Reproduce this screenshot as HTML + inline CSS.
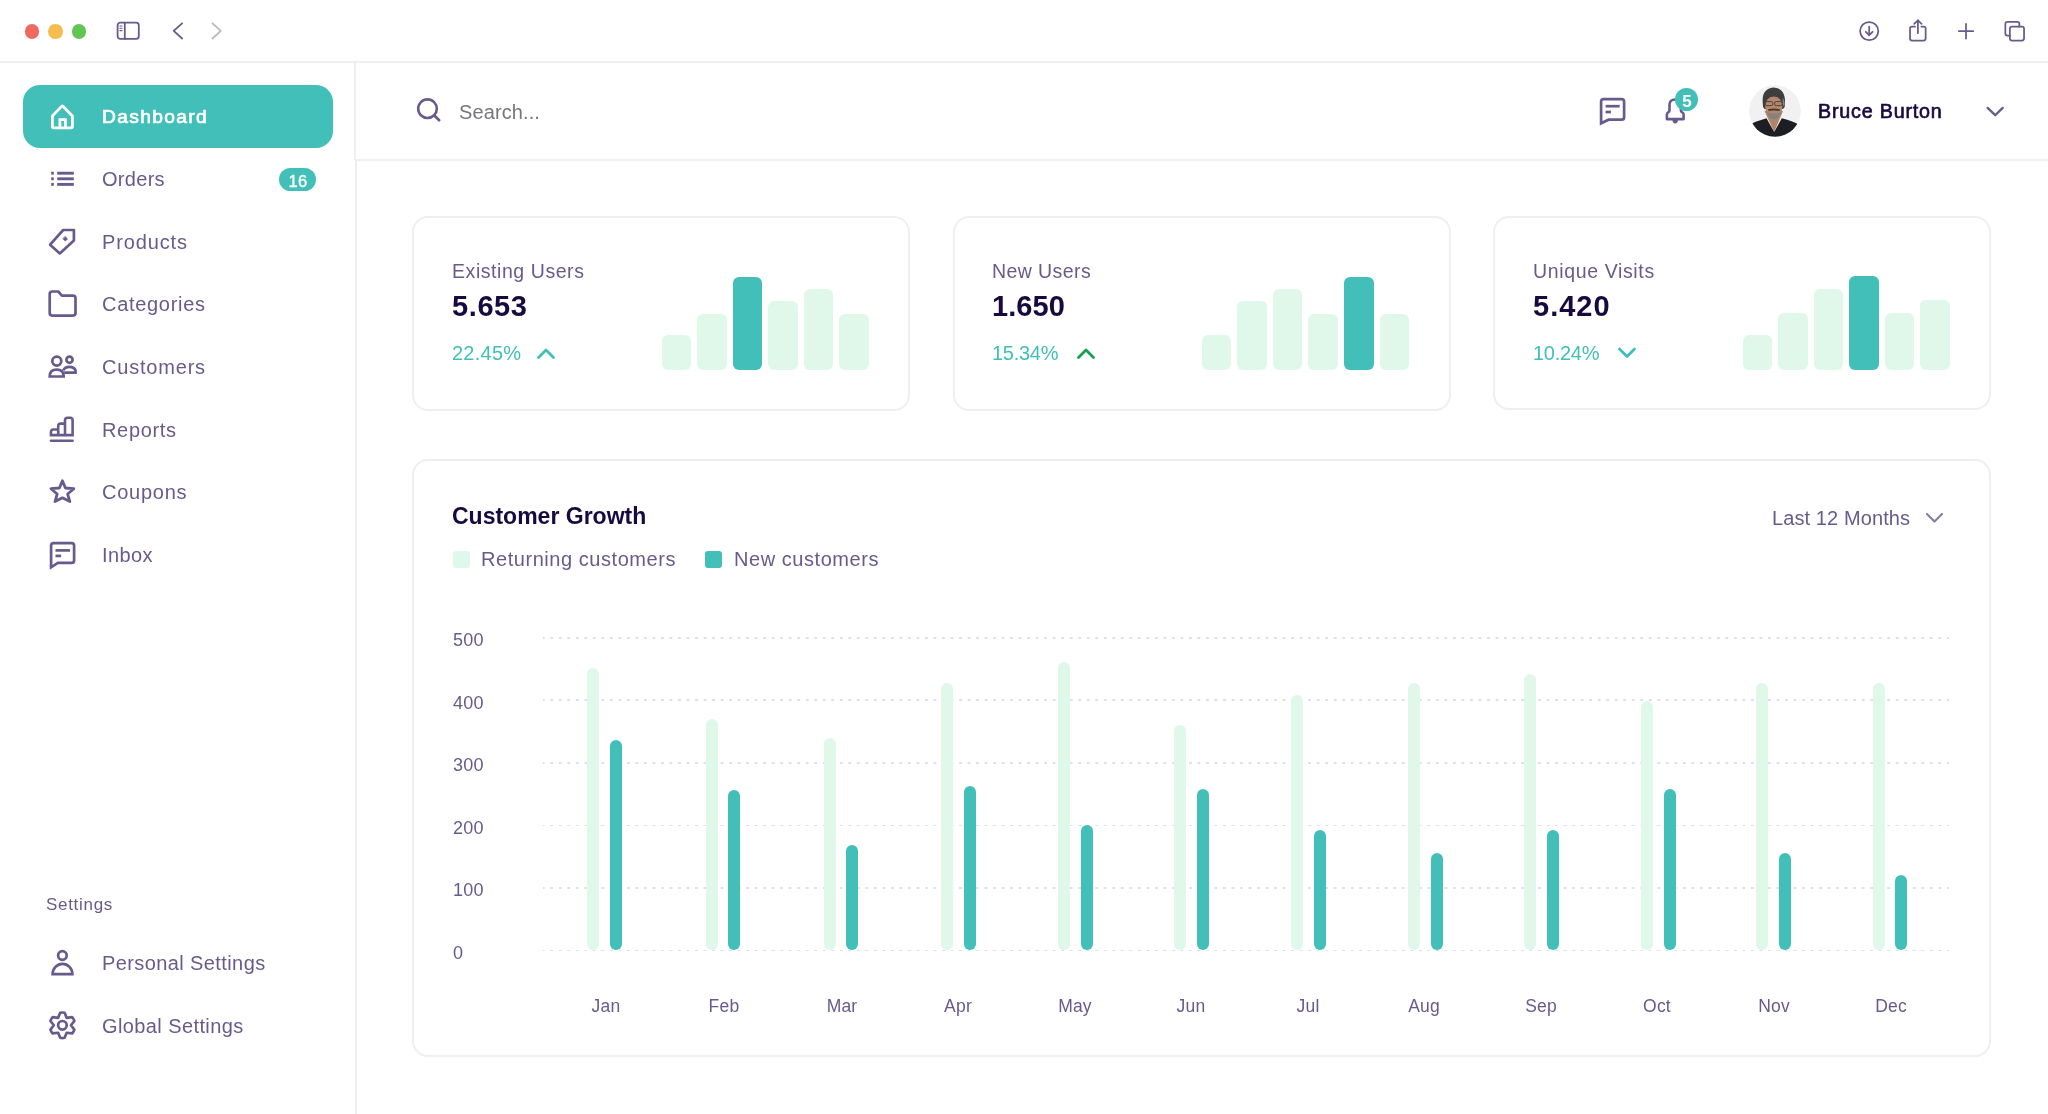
<!DOCTYPE html>
<html><head><meta charset="utf-8"><title>Dashboard</title>
<style>
html,body{margin:0;padding:0;}
body{width:2048px;height:1114px;position:relative;overflow:hidden;background:#fff;font-family:"Liberation Sans",sans-serif;}
.t{position:absolute;white-space:nowrap;line-height:1;will-change:transform;}
.i{position:absolute;display:block;overflow:visible;}
.b{position:absolute;}
</style></head><body>
<div class="b" style="left:24.55px;top:24px;width:14.5px;height:14.5px;border-radius:50%;background:#ee6a5f"></div>
<div class="b" style="left:48.25px;top:24px;width:14.5px;height:14.5px;border-radius:50%;background:#f5bd4f"></div>
<div class="b" style="left:71.75px;top:24px;width:14.5px;height:14.5px;border-radius:50%;background:#61c554"></div>
<svg class="i" style="left:116px;top:21px;" width="25" height="20" viewBox="0 0 25 20" fill="none" stroke="#675b8b" stroke-width="2.6" stroke-linecap="round" stroke-linejoin="round"><rect x="1.6" y="1.7" width="21.2" height="16.2" rx="2.6" stroke-width="1.8"/><line x1="8.8" y1="1.7" x2="8.8" y2="17.9" stroke-width="1.8"/><line x1="3.9" y1="5" x2="6" y2="5" stroke-width="1.1"/><line x1="3.9" y1="7.3" x2="6" y2="7.3" stroke-width="1.1"/><line x1="3.9" y1="9.6" x2="6" y2="9.6" stroke-width="1.1"/></svg>
<svg class="i" style="left:170px;top:20px;" width="16" height="22" viewBox="0 0 16 22" fill="none" stroke="#675b8b" stroke-width="2.6" stroke-linecap="round" stroke-linejoin="round"><polyline points="12.1,3.3 3.7,10.9 12.1,18.5" stroke-width="1.8"/></svg>
<svg class="i" style="left:209px;top:20px;" width="16" height="22" viewBox="0 0 16 22" fill="none" stroke="#675b8b" stroke-width="2.6" stroke-linecap="round" stroke-linejoin="round"><polyline points="3.5,3.3 11.8,10.9 3.5,18.5" stroke-width="1.8" stroke="#b9b9bd"/></svg>
<svg class="i" style="left:1857px;top:19px;" width="24" height="24" viewBox="0 0 24 24" fill="none" stroke="#675b8b" stroke-width="2.6" stroke-linecap="round" stroke-linejoin="round"><circle cx="12.2" cy="12.1" r="9.1" stroke-width="1.75"/><line x1="12.2" y1="7.7" x2="12.2" y2="16" stroke-width="1.75"/><polyline points="8.8,12.8 12.2,16.2 15.6,12.8" stroke-width="1.75"/></svg>
<svg class="i" style="left:1906px;top:17px;" width="24" height="27" viewBox="0 0 24 27" fill="none" stroke="#675b8b" stroke-width="2.6" stroke-linecap="round" stroke-linejoin="round"><path d="M9 9.65 H6 Q4.05 9.65 4.05 11.6 V21.6 Q4.05 23.55 6 23.55 H17.7 Q19.65 23.55 19.65 21.6 V11.6 Q19.65 9.65 17.7 9.65 H15.4" stroke-width="1.75"/><line x1="11.9" y1="3.4" x2="11.9" y2="16.2" stroke-width="1.75"/><polyline points="8.2,6.9 11.9,3.3 15.6,6.9" stroke-width="1.75"/></svg>
<svg class="i" style="left:1954px;top:19px;" width="24" height="24" viewBox="0 0 24 24" fill="none" stroke="#675b8b" stroke-width="2.6" stroke-linecap="round" stroke-linejoin="round"><line x1="12" y1="4.9" x2="12" y2="19.6" stroke-width="1.75"/><line x1="4.9" y1="12.2" x2="19.2" y2="12.2" stroke-width="1.75"/></svg>
<svg class="i" style="left:2002px;top:19px;" width="26" height="26" viewBox="0 0 26 26" fill="none" stroke="#675b8b" stroke-width="2.6" stroke-linecap="round" stroke-linejoin="round"><path d="M7.85 16.55 H5.35 Q3.35 16.55 3.35 14.55 V4.95 Q3.35 2.95 5.35 2.95 H15.35 Q17.35 2.95 17.35 4.95 V7.65" stroke-width="1.75"/><rect x="7.85" y="7.65" width="14.2" height="13.9" rx="2.2" stroke-width="1.75"/></svg>
<div class="b" style="left:0;top:61px;width:2048px;height:2px;background:#efeef3"></div>
<div class="b" style="left:354px;top:63px;width:2px;height:97px;background:#efeef3"></div>
<div class="b" style="left:355.2px;top:160px;width:2px;height:954px;background:#efeef3"></div>
<div class="b" style="left:355px;top:159.1px;width:1693px;height:2px;background:#efeef3"></div>
<div class="b" style="left:23px;top:85px;width:310px;height:63px;border-radius:17px;background:#41bfb8"></div>
<svg class="i" style="left:49px;top:101px;" width="27" height="31" viewBox="0 0 27 31" fill="none" stroke="#675b8b" stroke-width="2.6" stroke-linecap="round" stroke-linejoin="round"><path d="M3.4 15 L12.6 5.4 Q13.4 4.6 14.2 5.4 L23.4 15 V25.5 Q23.4 26.9 22 26.9 H4.8 Q3.4 26.9 3.4 25.5 Z" stroke="#fff" stroke-width="2.8"/><path d="M10.9 26.6 V18.7 H16.4 V26.6" stroke="#fff" stroke-width="2.8" stroke-linecap="butt" stroke-linejoin="miter"/></svg>
<div class="t" style="left:101.8px;top:107.05px;font-size:19.2px;font-weight:400;color:#fff;letter-spacing:1.35px;-webkit-text-stroke:0.7px #fff;">Dashboard</div>
<div class="t" style="left:101.8px;top:168.57px;font-size:20px;font-weight:400;color:#675b8b;letter-spacing:0.3px;">Orders</div>
<div class="t" style="left:101.8px;top:231.87px;font-size:20px;font-weight:400;color:#675b8b;letter-spacing:0.87px;">Products</div>
<div class="t" style="left:101.8px;top:294.37px;font-size:20px;font-weight:400;color:#675b8b;letter-spacing:0.7px;">Categories</div>
<div class="t" style="left:101.8px;top:356.87px;font-size:20px;font-weight:400;color:#675b8b;letter-spacing:0.8px;">Customers</div>
<div class="t" style="left:101.8px;top:419.87px;font-size:20px;font-weight:400;color:#675b8b;letter-spacing:0.68px;">Reports</div>
<div class="t" style="left:101.8px;top:481.77px;font-size:20px;font-weight:400;color:#675b8b;letter-spacing:0.75px;">Coupons</div>
<div class="t" style="left:101.8px;top:544.67px;font-size:20px;font-weight:400;color:#675b8b;letter-spacing:0.4px;">Inbox</div>
<div class="b" style="left:279px;top:168px;width:36.5px;height:22.5px;border-radius:12px;background:#41bfb8"></div>
<div class="t" style="left:197.60000000000002px;width:200px;text-align:center;top:172.83px;font-size:16.5px;font-weight:400;color:#fff;-webkit-text-stroke:0.35px #fff;letter-spacing:0.4px">16</div>
<svg class="i" style="left:48px;top:168px;" width="30" height="22" viewBox="0 0 30 22" fill="none" stroke="#675b8b" stroke-width="2.6" stroke-linecap="round" stroke-linejoin="round"><g stroke-width="2.9" stroke-linecap="butt"><line x1="3.2" y1="5.2" x2="5.8" y2="5.2"/><line x1="3.2" y1="10.8" x2="5.8" y2="10.8"/><line x1="3.2" y1="16.4" x2="5.8" y2="16.4"/><line x1="9.2" y1="5.2" x2="25.8" y2="5.2"/><line x1="9.2" y1="10.8" x2="25.8" y2="10.8"/><line x1="9.2" y1="16.4" x2="25.8" y2="16.4"/></g></svg>
<svg class="i" style="left:46px;top:227px;" width="32" height="31" viewBox="0 0 32 31" fill="none" stroke="#675b8b" stroke-width="2.6" stroke-linecap="round" stroke-linejoin="round"><path d="M17.2 3 H27.9 V13.5 L13.8 26.4 L4.1 17.7 Z" stroke-width="2.7"/><path d="M19.3 9.7 L21.5 11.9 L19.3 14.1 L17.1 11.9 Z" fill="#675b8b" stroke-width="0.8"/></svg>
<svg class="i" style="left:46px;top:288px;" width="32" height="31" viewBox="0 0 32 31" fill="none" stroke="#675b8b" stroke-width="2.6" stroke-linecap="round" stroke-linejoin="round"><path d="M3.7 6 Q3.7 3.5 6.2 3.5 H12.2 L15.9 7.7 H27 Q29.5 7.7 29.5 10.2 V25.1 Q29.5 27.6 27 27.6 H6.2 Q3.7 27.6 3.7 25.1 Z" stroke-width="2.7"/></svg>
<svg class="i" style="left:46px;top:353px;" width="32" height="28" viewBox="0 0 32 28" fill="none" stroke="#675b8b" stroke-width="2.6" stroke-linecap="round" stroke-linejoin="round"><circle cx="10.8" cy="8.1" r="4.5" stroke-width="2.7"/><circle cx="23.5" cy="6.7" r="3.1" stroke-width="2.7"/><path d="M3.7 23.5 Q3.7 16.7 10.7 16.7 Q17.7 16.7 17.7 23.5 Z" stroke-width="2.7" stroke-linejoin="miter"/><path d="M17.2 17.4 Q19 13.8 23.3 13.8 Q28 13.8 29.5 17.2 V19.6 H18.2" stroke-width="2.7" stroke-linejoin="miter" stroke-linecap="butt"/></svg>
<svg class="i" style="left:46px;top:414px;" width="32" height="31" viewBox="0 0 32 31" fill="none" stroke="#675b8b" stroke-width="2.6" stroke-linecap="round" stroke-linejoin="round"><path d="M4.96 21.1 V18 Q4.96 15.5 7.5 15.5 H12.2 V12.1 Q12.2 9.6 14.7 9.6 H19 V6.3 Q19 3.8 21.5 3.8 H24.1 Q26.6 3.8 26.6 6.3 V21.1 Z M12.2 15.5 V21.1 M19 9.6 V21.1" stroke-width="2.6" stroke-linejoin="miter"/><line x1="4.96" y1="26.8" x2="26.6" y2="26.8" stroke-width="2.6"/></svg>
<svg class="i" style="left:46px;top:476px;" width="32" height="31" viewBox="0 0 32 31" fill="none" stroke="#675b8b" stroke-width="2.6" stroke-linecap="round" stroke-linejoin="round"><path d="M16.4 4.8 L19.4 12 L27.9 12.7 L21.6 18 L23.9 25.6 L16.4 21.8 L9 25.6 L11.2 18 L5 12.7 L13.4 12 Z" stroke-width="2.8"/></svg>
<svg class="i" style="left:46px;top:539px;" width="32" height="32" viewBox="0 0 32 32" fill="none" stroke="#675b8b" stroke-width="2.6" stroke-linecap="round" stroke-linejoin="round"><path d="M5.1 28.3 V6.6 Q5.1 4.1 7.6 4.1 H25.6 Q28.1 4.1 28.1 6.6 V21.4 Q28.1 23.9 25.6 23.9 H11.9 Z" stroke-width="2.7" stroke-linejoin="miter" stroke-miterlimit="8"/><line x1="9.5" y1="11.4" x2="24" y2="11.4" stroke-width="2.7" stroke-linecap="butt"/><line x1="9.5" y1="16.9" x2="15.1" y2="16.9" stroke-width="2.7" stroke-linecap="butt"/></svg>
<div class="t" style="left:45.8px;top:895.51px;font-size:17px;font-weight:400;color:#675b8b;letter-spacing:0.7px;">Settings</div>
<div class="t" style="left:101.8px;top:952.67px;font-size:20px;font-weight:400;color:#675b8b;letter-spacing:0.4px;">Personal Settings</div>
<div class="t" style="left:101.8px;top:1015.57px;font-size:20px;font-weight:400;color:#675b8b;letter-spacing:0.4px;">Global Settings</div>
<svg class="i" style="left:46px;top:947px;" width="32" height="32" viewBox="0 0 32 32" fill="none" stroke="#675b8b" stroke-width="2.6" stroke-linecap="round" stroke-linejoin="round"><circle cx="16.4" cy="8.5" r="4.3" stroke-width="2.7"/><path d="M6.6 27.2 A9.9 10.3 0 0 1 26.4 27.2 Z" stroke-width="2.7" stroke-linejoin="miter"/></svg>
<svg class="i" style="left:46px;top:1009px;" width="32" height="32" viewBox="0 0 32 32" fill="none" stroke="#675b8b" stroke-width="2.6" stroke-linecap="round" stroke-linejoin="round"><path d="M14.19 3.79 Q16.40 3.20 18.61 3.79 L20.70 8.85 L26.13 8.14 Q27.74 9.75 28.33 11.96 L25.00 16.30 L28.33 20.64 Q27.74 22.85 26.13 24.46 L20.70 23.75 L18.61 28.81 Q16.40 29.40 14.19 28.81 L12.10 23.75 L6.67 24.46 Q5.06 22.85 4.47 20.64 L7.80 16.30 L4.47 11.96 Q5.06 9.75 6.67 8.14 L12.10 8.85 Z" stroke-width="2.7"/><circle cx="16.4" cy="16.3" r="4.3" stroke-width="2.7"/></svg>
<svg class="i" style="left:412px;top:94px;" width="32" height="32" viewBox="0 0 32 32" fill="none" stroke="#675b8b" stroke-width="2.6" stroke-linecap="round" stroke-linejoin="round"><circle cx="15.5" cy="14.7" r="9.3"/><line x1="22.3" y1="21.5" x2="27.2" y2="26.3"/></svg>
<div class="t" style="left:459px;top:102.37px;font-size:20px;font-weight:400;color:#77777b;letter-spacing:0.1px;">Search...</div>
<svg class="i" style="left:1596.2px;top:95.4px;" width="32" height="32" viewBox="0 0 32 32" fill="none" stroke="#675b8b" stroke-width="2.6" stroke-linecap="round" stroke-linejoin="round"><path d="M5.1 28.3 V6.6 Q5.1 4.1 7.6 4.1 H25.6 Q28.1 4.1 28.1 6.6 V22.2 Q28.1 24.7 25.6 24.7 H12.6 Z" stroke-width="2.7" stroke-linejoin="miter" stroke-miterlimit="8"/><line x1="9.6" y1="11.2" x2="23.7" y2="11.2" stroke-width="2.7" stroke-linecap="butt"/><line x1="9.6" y1="17" x2="14.9" y2="17" stroke-width="2.7" stroke-linecap="butt"/></svg>
<svg class="i" style="left:1660px;top:92px;" width="32" height="34" viewBox="0 0 32 34" fill="none" stroke="#675b8b" stroke-width="2.6" stroke-linecap="round" stroke-linejoin="round"><path d="M9.5 18.5 V13 Q9.5 7.5 15.2 7.5 Q20.9 7.5 20.9 13 V18.5 Q20.9 19.6 22 20.2 Q23.6 21 23.6 22.5 V27.1 H6.9 V22.5 Q6.9 21 8.4 20.2 Q9.5 19.6 9.5 18.5 Z" stroke-width="2.6" stroke-linejoin="round"/><path d="M12.4 28 Q12.6 31.4 15.2 31.4 Q17.8 31.4 18 28 Z" fill="#675b8b" stroke="none"/></svg>
<div class="b" style="left:1675.2px;top:87.9px;width:23px;height:23px;border-radius:50%;background:#41bfb8"></div>
<div class="t" style="left:1586.9px;width:200px;text-align:center;top:92.61px;font-size:17px;font-weight:700;color:#fff;letter-spacing:0px">5</div>
<svg class="i" style="left:1749px;top:85px" width="52" height="52" viewBox="0 0 52 52">
<defs><clipPath id="av"><circle cx="26" cy="26" r="25.8"/></clipPath></defs>
<g clip-path="url(#av)">
<rect width="52" height="52" fill="#f1f1f1"/>
<path d="M15.5 26 L25.2 47 L34 26 Z" fill="#b0846a"/>
<path d="M0 52 L0 40 Q6 36.5 17.5 33.2 L25.2 47 L32.8 33.2 Q44 36 52 40.5 V52 Z" fill="#1c1e23"/>
<path d="M13.8 19 Q12 4 24.5 2.6 Q37 3.5 36 19 Q36.5 22 34 24 L15.5 24 Q13.5 22 13.8 19 Z" fill="#3e3e3f"/>
<ellipse cx="24.8" cy="22" rx="8.6" ry="11" fill="#b5876b"/>
<path d="M15.8 17 Q15.5 9.5 24.8 8.6 Q34 9.5 33.9 17 Q32 11.8 24.8 11.6 Q17.6 11.8 15.8 17 Z" fill="#3e3e3f"/>
<path d="M33.8 13 Q36.3 16 35.3 22 L33.6 19 Z" fill="#8a8a8a"/>
<rect x="16.3" y="16.6" width="7.6" height="4" rx="1.6" fill="none" stroke="#4a4440" stroke-width="1"/>
<rect x="25.6" y="16.6" width="7.6" height="4" rx="1.6" fill="none" stroke="#4a4440" stroke-width="1"/>
<path d="M19 24.2 Q25 22.8 31 24.2 L30.5 26 Q25 24.8 19.5 26 Z" fill="#4b3b33"/>
<path d="M18.2 27 Q19 34 25 34.3 Q31 34 31.8 27 Q25 30 18.2 27 Z" fill="#85827e"/>
</g></svg>
<div class="t" style="left:1818.2px;top:102.32px;font-size:19.7px;font-weight:400;color:#160a3e;letter-spacing:0.8px;-webkit-text-stroke:0.65px #160a3e;">Bruce Burton</div>
<svg class="i" style="left:1984px;top:102px;" width="22" height="18" viewBox="0 0 22 18" fill="none" stroke="#675b8b" stroke-width="2.6" stroke-linecap="round" stroke-linejoin="round"><polyline points="3.6,5.9 11.2,13.2 18.7,5.9" stroke-width="2.3"/></svg>
<div class="b" style="left:412px;top:216.3px;width:494.3px;height:190.3px;border:2px solid #efeef3;border-radius:16px"></div>
<div class="t" style="left:452px;top:261.79px;font-size:19.5px;font-weight:400;color:#675b8b;letter-spacing:0.56px;">Existing Users</div>
<div class="t" style="left:452px;top:291.95px;font-size:29px;font-weight:700;color:#160a3e;letter-spacing:0.6px;">5.653</div>
<div class="t" style="left:452px;top:342.77px;font-size:20px;font-weight:400;color:#41bfb8;letter-spacing:0.25px;">22.45%</div>
<svg class="i" style="left:536px;top:346px;" width="20" height="14" viewBox="0 0 20 14" fill="none" stroke="#675b8b" stroke-width="2.6" stroke-linecap="round" stroke-linejoin="round"><polyline points="2.5,11.5 10,4 17.5,11.5" stroke="#41bfb8" stroke-width="2.8"/></svg>
<div class="b" style="left:661.50px;top:335px;width:29.5px;height:34.6px;border-radius:6px;background:#dff8ea"></div>
<div class="b" style="left:697.05px;top:313.8px;width:29.5px;height:55.8px;border-radius:6px;background:#dff8ea"></div>
<div class="b" style="left:732.60px;top:276.7px;width:29.5px;height:92.9px;border-radius:6px;background:#41bfb8"></div>
<div class="b" style="left:768.15px;top:300.8px;width:29.5px;height:68.8px;border-radius:6px;background:#dff8ea"></div>
<div class="b" style="left:803.70px;top:289.4px;width:29.5px;height:80.2px;border-radius:6px;background:#dff8ea"></div>
<div class="b" style="left:839.25px;top:313.8px;width:29.5px;height:55.8px;border-radius:6px;background:#dff8ea"></div>
<div class="b" style="left:953px;top:216.3px;width:494.3px;height:190.3px;border:2px solid #efeef3;border-radius:16px"></div>
<div class="t" style="left:992.3px;top:261.79px;font-size:19.5px;font-weight:400;color:#675b8b;letter-spacing:0.42px;">New Users</div>
<div class="t" style="left:992.3px;top:291.95px;font-size:29px;font-weight:700;color:#160a3e;letter-spacing:0.05px;">1.650</div>
<div class="t" style="left:992.3px;top:342.77px;font-size:20px;font-weight:400;color:#41bfb8;letter-spacing:-0.28px;">15.34%</div>
<svg class="i" style="left:1076.3px;top:346px;" width="20" height="14" viewBox="0 0 20 14" fill="none" stroke="#675b8b" stroke-width="2.6" stroke-linecap="round" stroke-linejoin="round"><polyline points="2.5,11.5 10,4 17.5,11.5" stroke="#12a150" stroke-width="2.8"/></svg>
<div class="b" style="left:1201.80px;top:335.1px;width:29.5px;height:34.5px;border-radius:6px;background:#dff8ea"></div>
<div class="b" style="left:1237.35px;top:300.8px;width:29.5px;height:68.8px;border-radius:6px;background:#dff8ea"></div>
<div class="b" style="left:1272.90px;top:289.4px;width:29.5px;height:80.2px;border-radius:6px;background:#dff8ea"></div>
<div class="b" style="left:1308.45px;top:313.8px;width:29.5px;height:55.8px;border-radius:6px;background:#dff8ea"></div>
<div class="b" style="left:1344.00px;top:276.7px;width:29.5px;height:92.9px;border-radius:6px;background:#41bfb8"></div>
<div class="b" style="left:1379.55px;top:313.8px;width:29.5px;height:55.8px;border-radius:6px;background:#dff8ea"></div>
<div class="b" style="left:1493px;top:215.8px;width:494.3px;height:190.3px;border:2px solid #efeef3;border-radius:16px"></div>
<div class="t" style="left:1533px;top:261.79px;font-size:19.5px;font-weight:400;color:#675b8b;letter-spacing:0.64px;">Unique Visits</div>
<div class="t" style="left:1533px;top:291.95px;font-size:29px;font-weight:700;color:#160a3e;letter-spacing:1.0px;">5.420</div>
<div class="t" style="left:1533px;top:342.77px;font-size:20px;font-weight:400;color:#41bfb8;letter-spacing:-0.27px;">10.24%</div>
<svg class="i" style="left:1617px;top:345px;" width="20" height="14" viewBox="0 0 20 14" fill="none" stroke="#675b8b" stroke-width="2.6" stroke-linecap="round" stroke-linejoin="round"><polyline points="2.5,4 10,11.5 17.5,4" stroke="#41bfb8" stroke-width="2.8"/></svg>
<div class="b" style="left:1742.50px;top:334.6px;width:29.5px;height:35.0px;border-radius:6px;background:#dff8ea"></div>
<div class="b" style="left:1778.05px;top:313px;width:29.5px;height:56.6px;border-radius:6px;background:#dff8ea"></div>
<div class="b" style="left:1813.60px;top:288.9px;width:29.5px;height:80.7px;border-radius:6px;background:#dff8ea"></div>
<div class="b" style="left:1849.15px;top:276.2px;width:29.5px;height:93.4px;border-radius:6px;background:#41bfb8"></div>
<div class="b" style="left:1884.70px;top:313px;width:29.5px;height:56.6px;border-radius:6px;background:#dff8ea"></div>
<div class="b" style="left:1920.25px;top:300.3px;width:29.5px;height:69.3px;border-radius:6px;background:#dff8ea"></div>
<div class="b" style="left:412px;top:459px;width:1575.2px;height:593.9px;border:2px solid #efeef3;border-radius:16px"></div>
<div class="t" style="left:452px;top:505.03px;font-size:23px;font-weight:700;color:#160a3e;letter-spacing:0px;">Customer Growth</div>
<div class="t" style="left:1771.7px;top:508.07px;font-size:20px;font-weight:400;color:#675b8b;letter-spacing:0.1px;">Last 12 Months</div>
<svg class="i" style="left:1923px;top:509px;" width="24" height="18" viewBox="0 0 24 18" fill="none" stroke="#675b8b" stroke-width="2.6" stroke-linecap="round" stroke-linejoin="round"><polyline points="4,5 11.5,12.5 19,5" stroke="#7f84a3" stroke-width="2.2"/></svg>
<div class="b" style="left:453px;top:550.5px;width:17px;height:17px;border-radius:3px;background:#dff8ea"></div>
<div class="t" style="left:480.8px;top:548.97px;font-size:20px;font-weight:400;color:#675b8b;letter-spacing:0.55px;">Returning customers</div>
<div class="b" style="left:705px;top:550.5px;width:17px;height:17px;border-radius:3px;background:#41bfb8"></div>
<div class="t" style="left:734px;top:548.97px;font-size:20px;font-weight:400;color:#675b8b;letter-spacing:0.55px;">New customers</div>
<div class="b" style="left:543px;top:636.85px;width:1406px;height:1.7px;background-image:linear-gradient(90deg,#dde0ea 0,#dde0ea 3px,transparent 3px);background-size:8.516px 1.7px;background-position:-1.22px 0"></div>
<div class="t" style="left:452.6px;top:631.16px;font-size:18px;font-weight:400;color:#675b8b;letter-spacing:0.3px;">500</div>
<div class="b" style="left:543px;top:699.45px;width:1406px;height:1.7px;background-image:linear-gradient(90deg,#dde0ea 0,#dde0ea 3px,transparent 3px);background-size:8.516px 1.7px;background-position:-1.22px 0"></div>
<div class="t" style="left:452.6px;top:693.76px;font-size:18px;font-weight:400;color:#675b8b;letter-spacing:0.3px;">400</div>
<div class="b" style="left:543px;top:762.05px;width:1406px;height:1.7px;background-image:linear-gradient(90deg,#dde0ea 0,#dde0ea 3px,transparent 3px);background-size:8.516px 1.7px;background-position:-1.22px 0"></div>
<div class="t" style="left:452.6px;top:756.36px;font-size:18px;font-weight:400;color:#675b8b;letter-spacing:0.3px;">300</div>
<div class="b" style="left:543px;top:824.55px;width:1406px;height:1.7px;background-image:linear-gradient(90deg,#dde0ea 0,#dde0ea 3px,transparent 3px);background-size:8.516px 1.7px;background-position:-1.22px 0"></div>
<div class="t" style="left:452.6px;top:818.86px;font-size:18px;font-weight:400;color:#675b8b;letter-spacing:0.3px;">200</div>
<div class="b" style="left:543px;top:887.15px;width:1406px;height:1.7px;background-image:linear-gradient(90deg,#dde0ea 0,#dde0ea 3px,transparent 3px);background-size:8.516px 1.7px;background-position:-1.22px 0"></div>
<div class="t" style="left:452.6px;top:881.46px;font-size:18px;font-weight:400;color:#675b8b;letter-spacing:0.3px;">100</div>
<div class="b" style="left:543px;top:949.75px;width:1406px;height:1.7px;background-image:linear-gradient(90deg,#dde0ea 0,#dde0ea 3px,transparent 3px);background-size:8.516px 1.7px;background-position:-1.22px 0"></div>
<div class="t" style="left:452.6px;top:944.06px;font-size:18px;font-weight:400;color:#675b8b;letter-spacing:0.3px;">0</div>
<div class="b" style="left:587.25px;top:668.2px;width:12px;height:281.6px;border-radius:6px;background:#dff8ea"></div>
<div class="b" style="left:609.85px;top:739.9px;width:12px;height:209.9px;border-radius:6px;background:#41bfb8"></div>
<div class="t" style="left:505.70000000000005px;width:200px;text-align:center;top:997.99px;font-size:17.5px;font-weight:400;color:#675b8b;letter-spacing:0.2px">Jan</div>
<div class="b" style="left:705.55px;top:718.8px;width:12px;height:231.0px;border-radius:6px;background:#dff8ea"></div>
<div class="b" style="left:728.15px;top:789.6px;width:12px;height:160.2px;border-radius:6px;background:#41bfb8"></div>
<div class="t" style="left:623.5px;width:200px;text-align:center;top:997.99px;font-size:17.5px;font-weight:400;color:#675b8b;letter-spacing:0.2px">Feb</div>
<div class="b" style="left:823.55px;top:738px;width:12px;height:211.8px;border-radius:6px;background:#dff8ea"></div>
<div class="b" style="left:846.15px;top:845px;width:12px;height:104.8px;border-radius:6px;background:#41bfb8"></div>
<div class="t" style="left:741.7px;width:200px;text-align:center;top:997.99px;font-size:17.5px;font-weight:400;color:#675b8b;letter-spacing:0.2px">Mar</div>
<div class="b" style="left:941.15px;top:682.6px;width:12px;height:267.2px;border-radius:6px;background:#dff8ea"></div>
<div class="b" style="left:963.75px;top:785.8px;width:12px;height:164.0px;border-radius:6px;background:#41bfb8"></div>
<div class="t" style="left:857.8000000000001px;width:200px;text-align:center;top:997.99px;font-size:17.5px;font-weight:400;color:#675b8b;letter-spacing:0.2px">Apr</div>
<div class="b" style="left:1057.95px;top:662.2px;width:12px;height:287.6px;border-radius:6px;background:#dff8ea"></div>
<div class="b" style="left:1080.55px;top:824.7px;width:12px;height:125.1px;border-radius:6px;background:#41bfb8"></div>
<div class="t" style="left:975.0999999999999px;width:200px;text-align:center;top:997.99px;font-size:17.5px;font-weight:400;color:#675b8b;letter-spacing:0.2px">May</div>
<div class="b" style="left:1174.45px;top:725.2px;width:12px;height:224.6px;border-radius:6px;background:#dff8ea"></div>
<div class="b" style="left:1197.05px;top:788.9px;width:12px;height:160.9px;border-radius:6px;background:#41bfb8"></div>
<div class="t" style="left:1090.6px;width:200px;text-align:center;top:997.99px;font-size:17.5px;font-weight:400;color:#675b8b;letter-spacing:0.2px">Jun</div>
<div class="b" style="left:1290.95px;top:695.4px;width:12px;height:254.4px;border-radius:6px;background:#dff8ea"></div>
<div class="b" style="left:1313.55px;top:830px;width:12px;height:119.8px;border-radius:6px;background:#41bfb8"></div>
<div class="t" style="left:1207.6px;width:200px;text-align:center;top:997.99px;font-size:17.5px;font-weight:400;color:#675b8b;letter-spacing:0.2px">Jul</div>
<div class="b" style="left:1407.95px;top:682.6px;width:12px;height:267.2px;border-radius:6px;background:#dff8ea"></div>
<div class="b" style="left:1430.55px;top:853px;width:12px;height:96.8px;border-radius:6px;background:#41bfb8"></div>
<div class="t" style="left:1324.3999999999999px;width:200px;text-align:center;top:997.99px;font-size:17.5px;font-weight:400;color:#675b8b;letter-spacing:0.2px">Aug</div>
<div class="b" style="left:1524.35px;top:673.9px;width:12px;height:275.9px;border-radius:6px;background:#dff8ea"></div>
<div class="b" style="left:1546.95px;top:830.3px;width:12px;height:119.5px;border-radius:6px;background:#41bfb8"></div>
<div class="t" style="left:1441.3999999999999px;width:200px;text-align:center;top:997.99px;font-size:17.5px;font-weight:400;color:#675b8b;letter-spacing:0.2px">Sep</div>
<div class="b" style="left:1641.25px;top:701px;width:12px;height:248.8px;border-radius:6px;background:#dff8ea"></div>
<div class="b" style="left:1663.85px;top:789.2px;width:12px;height:160.6px;border-radius:6px;background:#41bfb8"></div>
<div class="t" style="left:1556.8999999999999px;width:200px;text-align:center;top:997.99px;font-size:17.5px;font-weight:400;color:#675b8b;letter-spacing:0.2px">Oct</div>
<div class="b" style="left:1756.25px;top:682.6px;width:12px;height:267.2px;border-radius:6px;background:#dff8ea"></div>
<div class="b" style="left:1778.85px;top:853px;width:12px;height:96.8px;border-radius:6px;background:#41bfb8"></div>
<div class="t" style="left:1674.0px;width:200px;text-align:center;top:997.99px;font-size:17.5px;font-weight:400;color:#675b8b;letter-spacing:0.2px">Nov</div>
<div class="b" style="left:1872.75px;top:682.6px;width:12px;height:267.2px;border-radius:6px;background:#dff8ea"></div>
<div class="b" style="left:1895.35px;top:874.5px;width:12px;height:75.3px;border-radius:6px;background:#41bfb8"></div>
<div class="t" style="left:1790.8px;width:200px;text-align:center;top:997.99px;font-size:17.5px;font-weight:400;color:#675b8b;letter-spacing:0.2px">Dec</div>
</body></html>
